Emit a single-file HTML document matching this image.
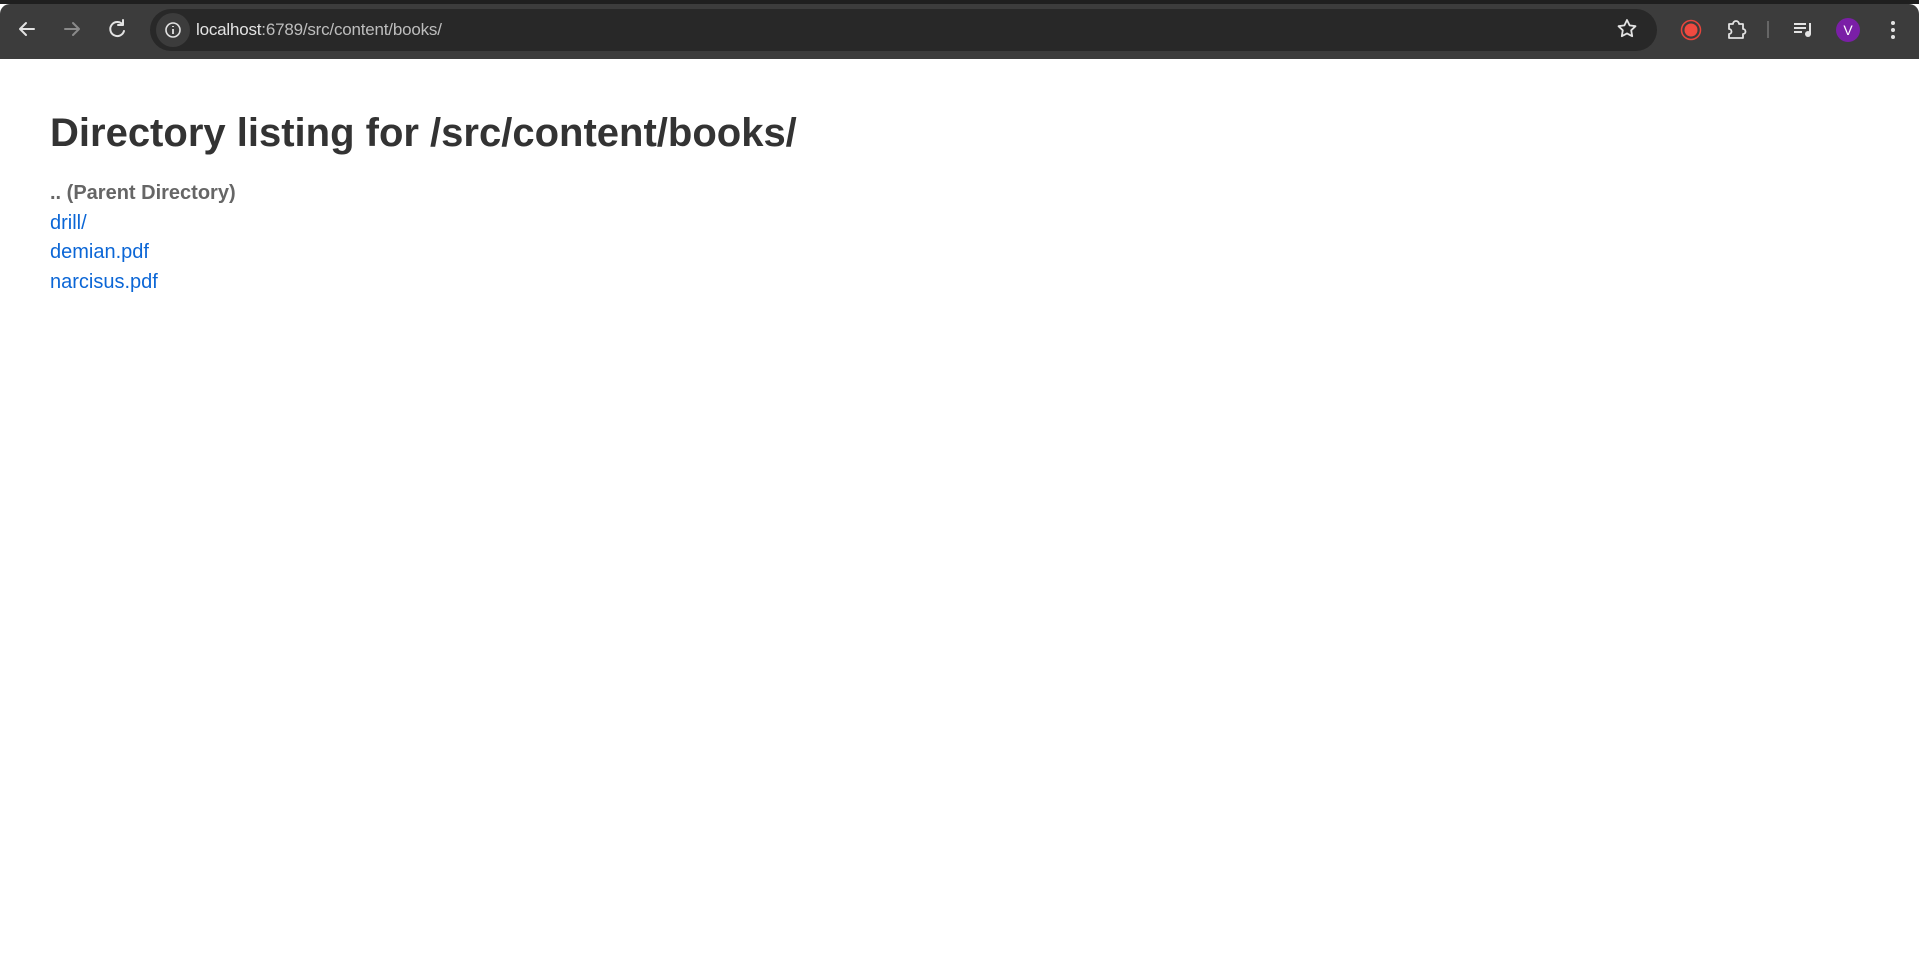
<!DOCTYPE html>
<html><head><meta charset="utf-8"><style>
*{margin:0;padding:0;box-sizing:border-box}
body{width:1919px;height:969px;background:#fff;font-family:"Liberation Sans",Arial,sans-serif;overflow:hidden;position:relative}
.top{position:absolute;left:0;top:0;width:1919px;height:4px;background:#1f1f1f}
.bar{position:absolute;left:0;top:4px;width:1919px;height:55px;background:#3c3c3c;border-radius:10px 10px 0 0}
.addr{position:absolute;left:150px;top:9px;width:1507px;height:42px;background:#282828;border-radius:21px}
.info{position:absolute;left:156px;top:13px;width:34px;height:34px;border-radius:17px;background:#3c3c3c}
.url{position:absolute;left:196px;top:20px;font-size:17px;color:#e3e3e3;letter-spacing:-0.2px}
.url span{color:#bdbdbd}
svg{position:absolute}
h1{position:absolute;left:50px;top:111px;font-size:40px;font-weight:bold;color:#333;white-space:nowrap}
.list{position:absolute;left:50px;top:179px;font-size:20px;line-height:29.5px}
.list b{color:#666}
.list a{color:#0b66d6;text-decoration:none;display:block}
</style></head><body>
<div class="top"></div>
<div class="bar"></div>
<svg width="1919" height="59" style="left:0;top:0">
<g fill="none" stroke="#e3e3e3" stroke-width="2" stroke-linecap="round" stroke-linejoin="round">
<path d="M34 29H20M26 23l-6 6 6 6"/>
<path d="M65 29h14M73 23l6 6-6 6" stroke="#8a8a8a"/>
<path d="M123 25a7 7 0 1 0 1 6M123 20v5h-5"/>
</g>
</svg>
<div class="addr"></div>
<div class="info"></div>
<svg width="20" height="20" style="left:163px;top:20px"><circle cx="10" cy="10" r="7" fill="none" stroke="#e3e3e3" stroke-width="1.6"/><path d="M10 9v5M10 6v1" stroke="#e3e3e3" stroke-width="1.8"/></svg>
<div class="url">localhost<span>:6789/src/content/books/</span></div>
<svg width="1919" height="59" style="left:0;top:0">
<path d="M1627 20l2.6 5.4 5.9.8-4.3 4.1 1 5.9-5.2-2.8-5.2 2.8 1-5.9-4.3-4.1 5.9-.8z" fill="none" stroke="#e3e3e3" stroke-width="1.8" stroke-linejoin="round"/>
<circle cx="1691" cy="30" r="9.5" fill="none" stroke="#e8453c" stroke-width="1.5"/>
<circle cx="1691" cy="30" r="6.5" fill="#f04a40"/>
<path d="M1729 24h4a3 3 0 0 1 6 0h4v5a2.5 2.5 0 0 1 0 5v4h-14v-4a2.5 2.5 0 0 0 0-5z" fill="none" stroke="#e3e3e3" stroke-width="1.8" stroke-linejoin="round"/>
<path d="M1768 21v17" stroke="#666" stroke-width="2"/>
<path d="M1794 24h12M1794 28h12M1794 32h8M1810 23v11" stroke="#e3e3e3" stroke-width="2"/>
<circle cx="1808" cy="34" r="3" fill="#e3e3e3"/>
<circle cx="1848" cy="30" r="12" fill="#7a1fa6"/>
<text x="1848" y="35" fill="#fff" font-size="14" text-anchor="middle" font-family="Liberation Sans">V</text>
<circle cx="1893" cy="23" r="2" fill="#e3e3e3"/><circle cx="1893" cy="30" r="2" fill="#e3e3e3"/><circle cx="1893" cy="37" r="2" fill="#e3e3e3"/>
</svg>
<h1>Directory listing for /src/content/books/</h1>
<div class="list">
<b>.. (Parent Directory)</b>
<a>drill/</a>
<a>demian.pdf</a>
<a>narcisus.pdf</a>
</div>
</body></html>
